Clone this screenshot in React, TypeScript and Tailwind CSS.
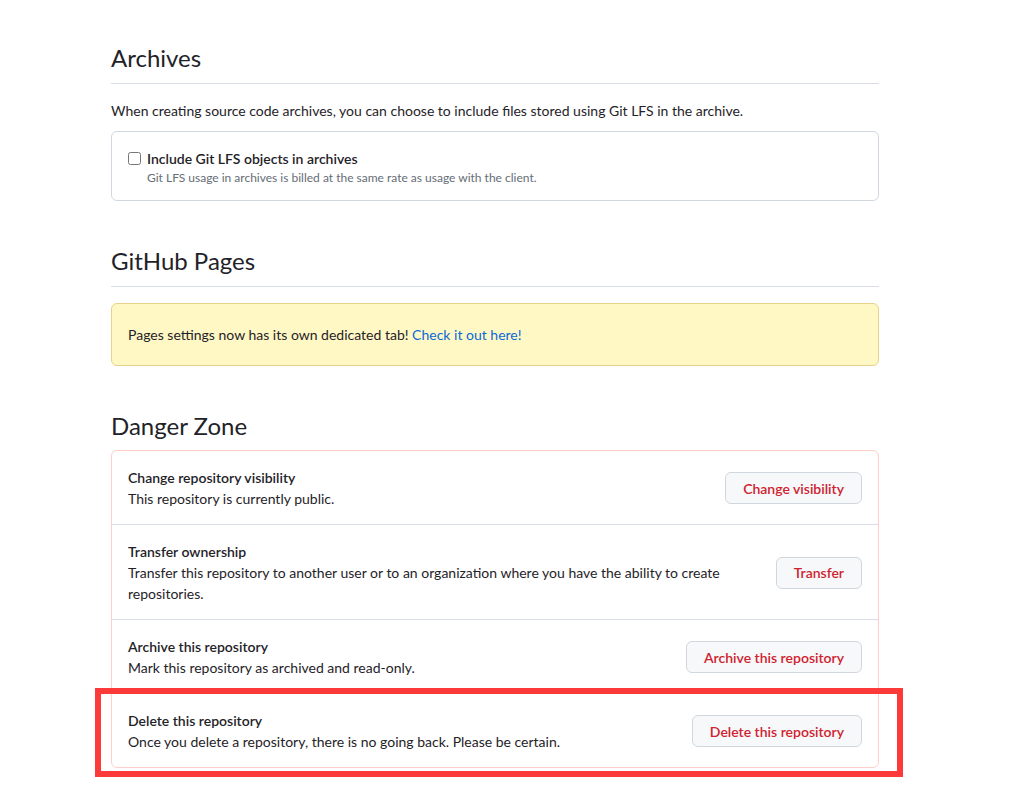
import React from "react";

const font = { fontFamily: 'Lato, "Noto Sans", sans-serif' };

function Heading({ title, divider = true }: { title: string; divider?: boolean }) {
  return (
    <h2
      className={`text-[24px] leading-[36px] font-normal text-[#1f2328] border-b ${
        divider ? "pb-[7px] border-[#d8dee4]" : "pb-[5px] border-transparent"
      }`}
    >
      {title}
    </h2>
  );
}

interface DangerRowProps {
  title: string;
  desc: string;
  action: string;
  last?: boolean;
  highlight?: boolean;
}

function DangerRow({ title, desc, action, last, highlight }: DangerRowProps) {
  return (
    <div className={`relative flex items-center gap-4 px-4 pt-4 pb-[15px] ${last ? "" : "border-b border-[#d8dee4]"}`}>
      <div className="flex-1 text-[14px] leading-[21px] text-[#1f2328]">
        <div className="font-semibold">{title}</div>
        <div>{desc}</div>
      </div>
      <button className="h-8 px-[17px] shrink-0 rounded-md border border-[#d0d7de] bg-[#f6f8fa] text-[14px] font-semibold text-[#cf222e]">
        {action}
      </button>
      {highlight && (
        <div className="absolute -left-[17px] -right-[25px] -top-[6px] -bottom-[10px] border-[6px] border-[#fc3a3a] pointer-events-none" />
      )}
    </div>
  );
}

export default function App() {
  return (
    <div className="min-h-screen bg-white" style={font}>
      <div className="ml-[111px] w-[768px] pt-[40px] pb-8">
        <Heading title="Archives" />
        <p className="mt-4 text-[14px] leading-[21px] text-[#1f2328]">
          When creating source code archives, you can choose to include files stored using Git LFS in the archive.
        </p>
        <div className="mt-[10px] rounded-md border border-[#d0d7de] px-4 pt-4 pb-[13px]">
          <label className="flex items-center gap-[6px] text-[14px] leading-[21px] font-semibold text-[#1f2328]">
            <input type="checkbox" className="w-[13px] h-[13px] m-0" />
            Include Git LFS objects in archives
          </label>
          <div className="pl-[19px] text-[12px] leading-[18px] text-[#656d76]">
            Git LFS usage in archives is billed at the same rate as usage with the client.
          </div>
        </div>

        <div className="mt-[42px]">
          <Heading title="GitHub Pages" />
        </div>
        <div className="mt-4 rounded-md border border-[#e8d18a] bg-[#fff8c5] px-4 py-5 text-[14px] leading-[21px] text-[#1f2328]">
          Pages settings now has its own dedicated tab!{" "}
          <a className="text-[#0969da]" href="#">
            Check it out here!
          </a>
        </div>

        <div className="mt-[42px]">
          <Heading title="Danger Zone" divider={false} />
        </div>
        <div className="rounded-md border border-[#ffcecb]">
          <DangerRow
            title="Change repository visibility"
            desc="This repository is currently public."
            action="Change visibility"
          />
          <DangerRow
            title="Transfer ownership"
            desc="Transfer this repository to another user or to an organization where you have the ability to create repositories."
            action="Transfer"
          />
          <DangerRow
            title="Archive this repository"
            desc="Mark this repository as archived and read-only."
            action="Archive this repository"
          />
          <DangerRow
            title="Delete this repository"
            desc="Once you delete a repository, there is no going back. Please be certain."
            action="Delete this repository"
            last
            highlight
          />
        </div>
      </div>
    </div>
  );
}
